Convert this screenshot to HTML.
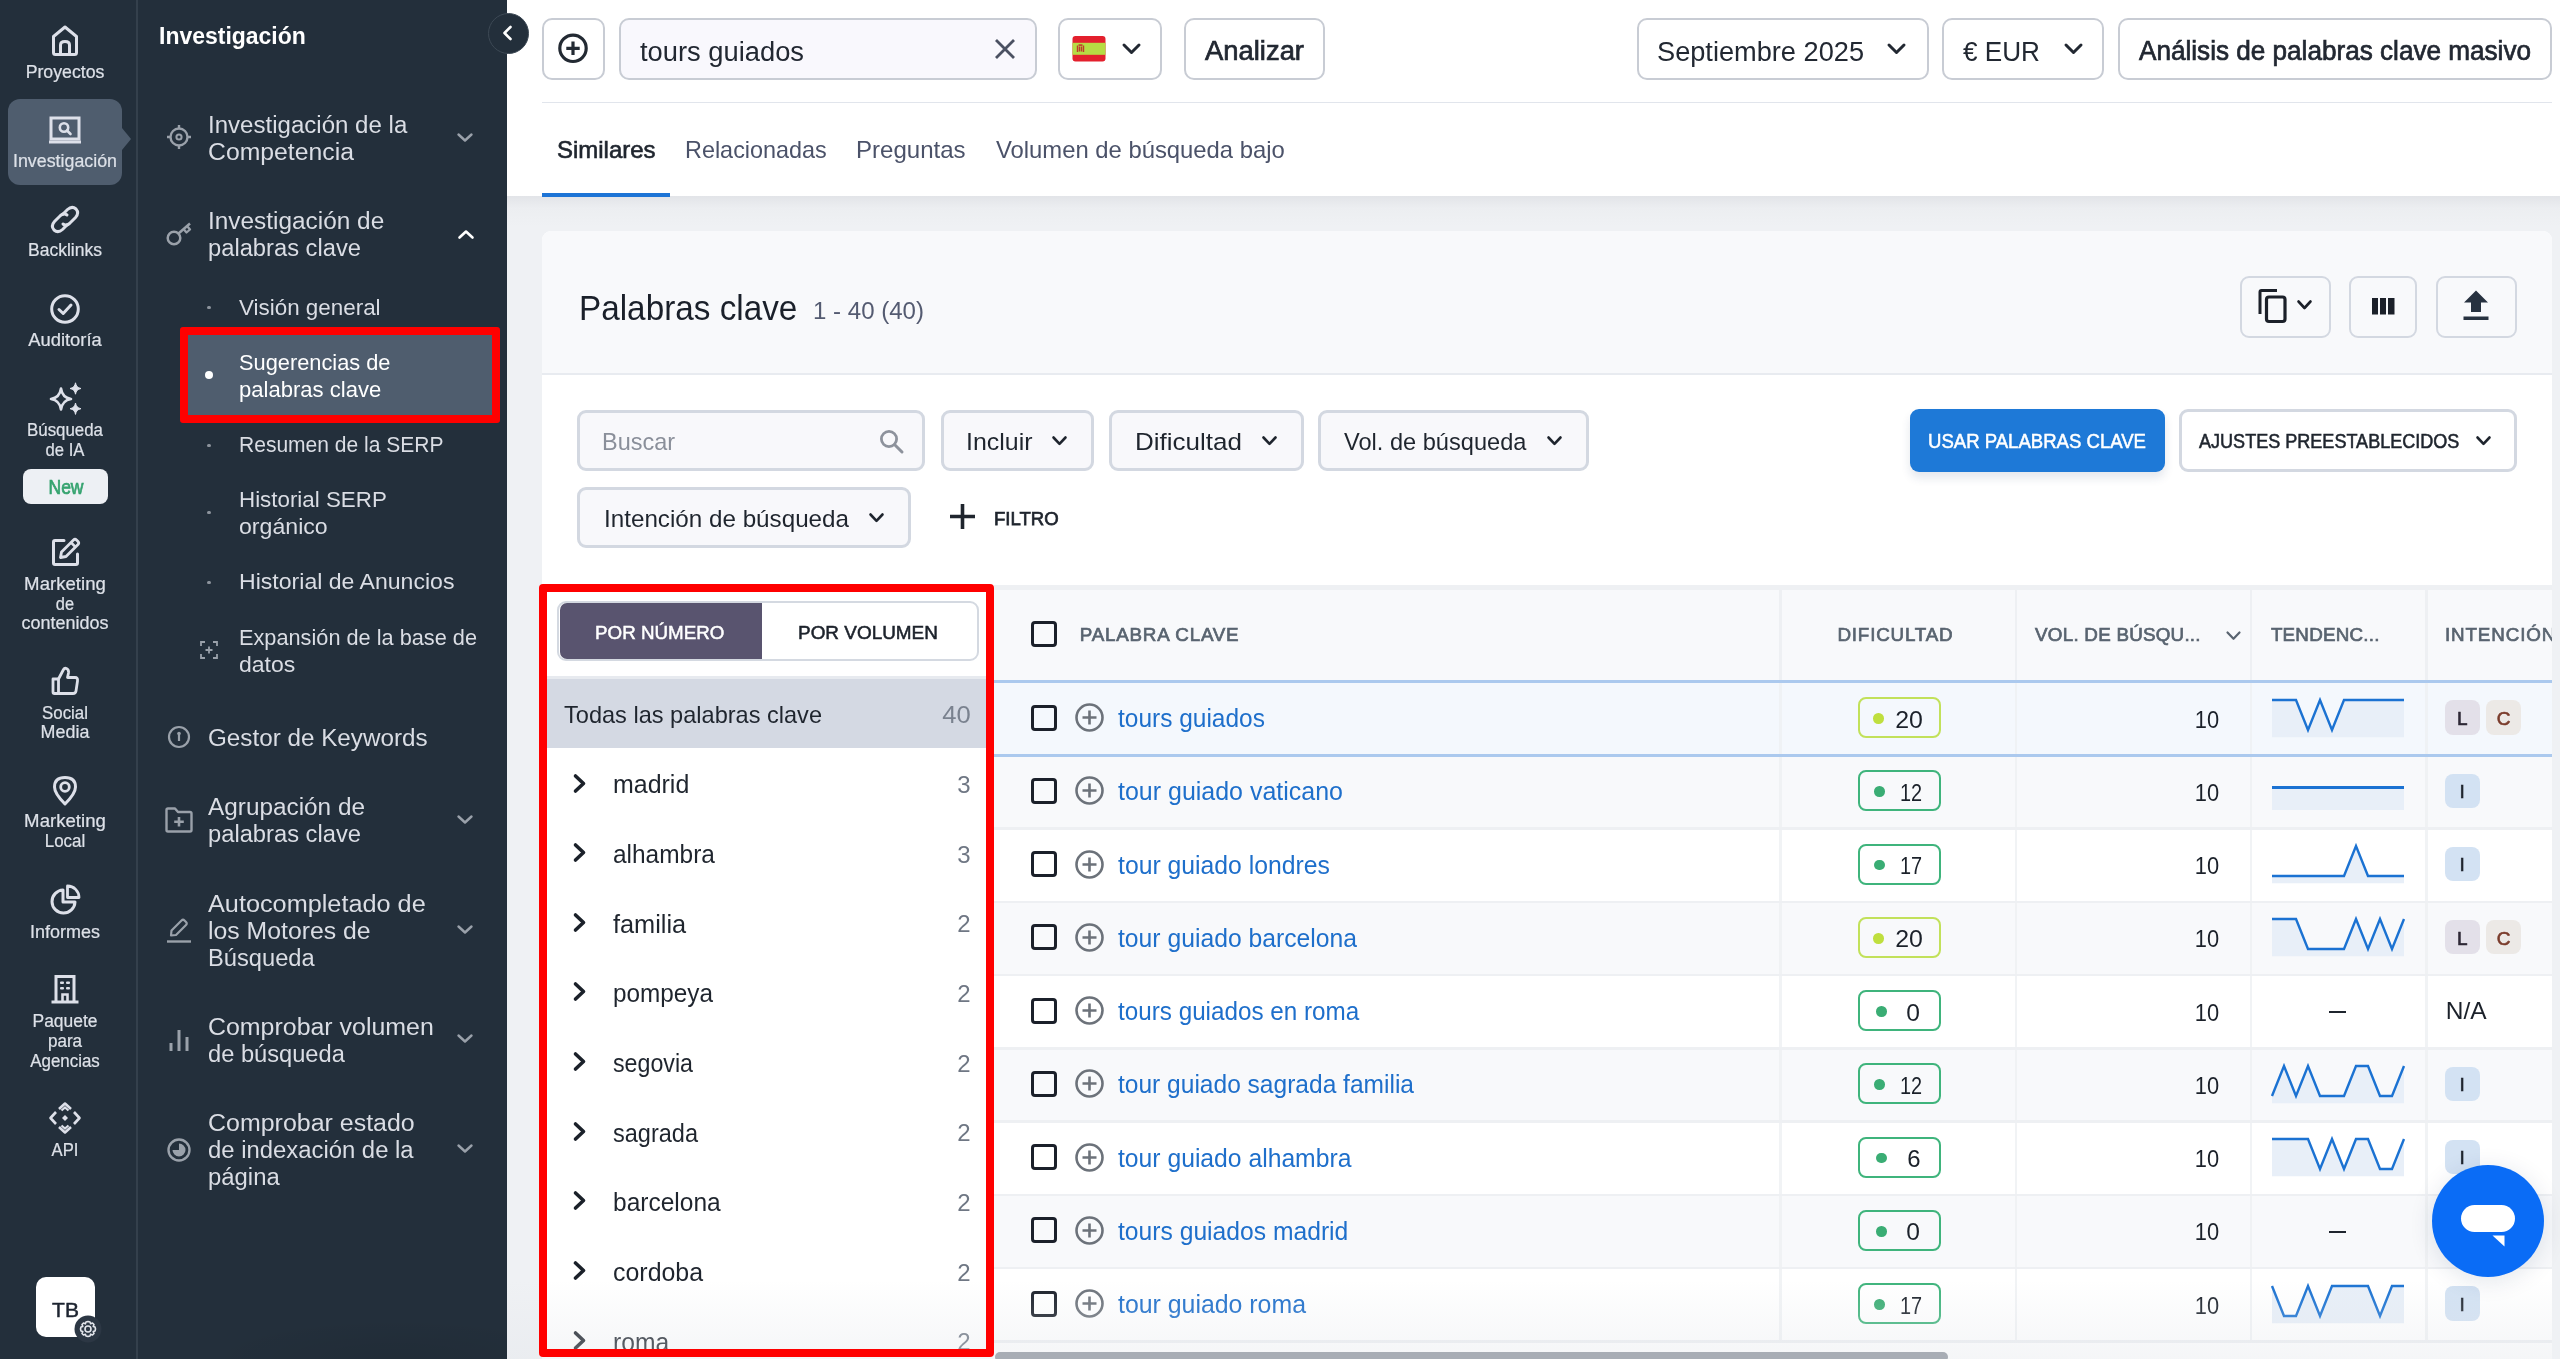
<!DOCTYPE html><html><head><meta charset="utf-8"><style>
html,body{margin:0;padding:0;width:2560px;height:1359px;overflow:hidden;background:#eff1f4;}
body{position:relative;font-family:"Liberation Sans",sans-serif;}
.t{position:absolute;white-space:nowrap;}
.b{position:absolute;box-sizing:border-box;}
svg.b{overflow:visible;}
#root{position:absolute;left:0;top:0;width:2560px;height:1359px;overflow:hidden;background:#eff1f4;will-change:transform;}
</style></head><body><div id="root">
<div class="b" style="left:0.00px;top:0.00px;width:507.00px;height:1359.00px;background:#232f3b;"></div>
<div class="b" style="left:136.00px;top:0.00px;width:2.00px;height:1359.00px;background:#34404c;"></div>
<svg class="b" style="left:50.00px;top:24.00px;" width="30" height="33" viewBox="0 0 30 33" fill="none"><path d="M3.5 12.5 L15 3 L26.5 12.5 V28.5 Q26.5 30.5 24.5 30.5 H5.5 Q3.5 30.5 3.5 28.5 Z" stroke="#dde0e9" stroke-width="3" stroke-linejoin="round"/><path d="M10.5 30.5 V21 Q10.5 17.5 15 17.5 Q19.5 17.5 19.5 21 V30.5" stroke="#dde0e9" stroke-width="3"/></svg>
<div class="t" style="top:63.69px;font-size:17.5px;line-height:17.5px;color:#dde1e8;transform:scaleX(1.0114);transform-origin:center top;left:0.00px;width:130px;text-align:center;-webkit-text-stroke:0.2px #dde1e8;">Proyectos</div>
<div class="b" style="left:8.00px;top:98.50px;width:114.00px;height:86.00px;background:#4f5d6e;border-radius:12px;"></div>
<svg class="b" style="left:122.00px;top:128.00px;" width="10" height="22" viewBox="0 0 10 22" fill="none"><path d="M0 0 L9 11 L0 22 Z" fill="#4f5d6e"/></svg>
<svg class="b" style="left:48.00px;top:116.00px;" width="34" height="29" viewBox="0 0 34 29" fill="none"><rect x="3" y="2" width="28" height="21" stroke="#dde0e9" stroke-width="3"/><rect x="1" y="24.5" width="32" height="3" fill="#dde0e9"/><circle cx="16" cy="11.5" r="4.2" stroke="#dde0e9" stroke-width="2.6"/><path d="M19 14.5 L22.5 18" stroke="#dde0e9" stroke-width="2.6" stroke-linecap="round"/></svg>
<div class="t" style="top:153.19px;font-size:17.5px;line-height:17.5px;color:#dde1e8;transform:scaleX(1.0181);transform-origin:center top;left:0.00px;width:130px;text-align:center;-webkit-text-stroke:0.2px #dde1e8;">Investigación</div>
<svg class="b" style="left:50.00px;top:204.00px;" width="30" height="31" viewBox="0 0 30 31" fill="none"><path d="M12.5 10.5 L17.5 5.5 Q22 1.5 26 5 Q29.5 9 25.5 13.5 L19.5 19.5 Q16 22.5 13 20" stroke="#dde0e9" stroke-width="3" stroke-linecap="round"/><path d="M17.5 20.5 L12.5 25.5 Q8 29.5 4 26 Q0.5 22 4.5 17.5 L10.5 11.5 Q14 8.5 17 11" stroke="#dde0e9" stroke-width="3" stroke-linecap="round"/></svg>
<div class="t" style="top:242.49px;font-size:17.5px;line-height:17.5px;color:#dde1e8;transform:scaleX(1.0011);transform-origin:center top;left:0.00px;width:130px;text-align:center;-webkit-text-stroke:0.2px #dde1e8;">Backlinks</div>
<svg class="b" style="left:50.00px;top:294.00px;" width="30" height="30" viewBox="0 0 30 30" fill="none"><circle cx="15" cy="15" r="13.3" stroke="#dde0e9" stroke-width="3"/><path d="M9 15.5 L13.2 19.5 L21 11" stroke="#dde0e9" stroke-width="3" stroke-linecap="round" stroke-linejoin="round"/></svg>
<div class="t" style="top:332.29px;font-size:17.5px;line-height:17.5px;color:#dde1e8;transform:scaleX(1.0508);transform-origin:center top;left:0.00px;width:130px;text-align:center;-webkit-text-stroke:0.2px #dde1e8;">Auditoría</div>
<svg class="b" style="left:48.00px;top:382.00px;" width="34" height="34" viewBox="0 0 34 34" fill="none"><path d="M13 6.5 Q14.2 15.5 23 17 Q14.2 18.5 13 27.5 Q11.8 18.5 3 17 Q11.8 15.5 13 6.5 Z" stroke="#dde0e9" stroke-width="2.6" stroke-linejoin="round"/><path d="M27.5 0.8 Q28.2 5.7 33 6.5 Q28.2 7.3 27.5 12.2 Q26.8 7.3 22 6.5 Q26.8 5.7 27.5 0.8 Z" fill="#dde0e9" stroke="#dde0e9" stroke-width="1"/><path d="M27.5 21 Q28.2 25.9 33 26.7 Q28.2 27.5 27.5 32.4 Q26.8 27.5 22 26.7 Q26.8 25.9 27.5 21 Z" fill="#dde0e9" stroke="#dde0e9" stroke-width="1"/></svg>
<div class="t" style="top:422.19px;font-size:17.5px;line-height:17.5px;color:#dde1e8;transform:scaleX(0.9642);transform-origin:center top;left:0.00px;width:130px;text-align:center;-webkit-text-stroke:0.2px #dde1e8;">Búsqueda</div>
<div class="t" style="top:441.99px;font-size:17.5px;line-height:17.5px;color:#dde1e8;transform:scaleX(0.9520);transform-origin:center top;left:0.00px;width:130px;text-align:center;-webkit-text-stroke:0.2px #dde1e8;">de IA</div>
<div class="b" style="left:23.00px;top:469.00px;width:85.00px;height:34.50px;background:#edf0f4;border-radius:8px;"></div>
<div class="t" style="top:477.99px;font-size:19.5px;line-height:19.5px;color:#35a36f;-webkit-text-stroke:0.7px #35a36f;transform:scaleX(0.8972);transform-origin:center top;left:25.50px;width:80px;text-align:center;">New</div>
<svg class="b" style="left:50.00px;top:537.00px;" width="31" height="31" viewBox="0 0 31 31" fill="none"><path d="M14 3.5 H5 Q3.5 3.5 3.5 5 V26 Q3.5 27.5 5 27.5 H26 Q27.5 27.5 27.5 26 V17" stroke="#dde0e9" stroke-width="3" stroke-linecap="round"/><path d="M10.5 20.5 L11.5 15 L23.5 3 Q25 1.6 26.5 3 L28 4.5 Q29.4 6 28 7.5 L16 19.5 Z" stroke="#dde0e9" stroke-width="2.8" stroke-linejoin="round"/><path d="M21 5.5 L25.5 10" stroke="#dde0e9" stroke-width="2.5"/></svg>
<div class="t" style="top:575.69px;font-size:17.5px;line-height:17.5px;color:#dde1e8;transform:scaleX(1.0639);transform-origin:center top;left:0.00px;width:130px;text-align:center;-webkit-text-stroke:0.2px #dde1e8;">Marketing</div>
<div class="t" style="top:595.69px;font-size:17.5px;line-height:17.5px;color:#dde1e8;transform:scaleX(0.9375);transform-origin:center top;left:0.00px;width:130px;text-align:center;-webkit-text-stroke:0.2px #dde1e8;">de</div>
<div class="t" style="top:615.39px;font-size:17.5px;line-height:17.5px;color:#dde1e8;transform:scaleX(1.0278);transform-origin:center top;left:0.00px;width:130px;text-align:center;-webkit-text-stroke:0.2px #dde1e8;">contenidos</div>
<svg class="b" style="left:50.00px;top:666.00px;" width="30" height="30" viewBox="0 0 30 30" fill="none"><path d="M3 13 H8.5 V27.5 H4.5 Q3 27.5 3 26 Z" stroke="#dde0e9" stroke-width="2.8" stroke-linejoin="round"/><path d="M8.5 13 L13.5 3.5 Q14.5 1.8 16.5 2.5 Q19 3.5 18.5 7 L17.5 11.5 H25 Q28 11.5 27.5 15 L26 25 Q25.6 27.5 23 27.5 H8.5" stroke="#dde0e9" stroke-width="2.8" stroke-linejoin="round"/></svg>
<div class="t" style="top:704.69px;font-size:17.5px;line-height:17.5px;color:#dde1e8;transform:scaleX(0.9651);transform-origin:center top;left:0.00px;width:130px;text-align:center;-webkit-text-stroke:0.2px #dde1e8;">Social</div>
<div class="t" style="top:724.49px;font-size:17.5px;line-height:17.5px;color:#dde1e8;transform:scaleX(1.0227);transform-origin:center top;left:0.00px;width:130px;text-align:center;-webkit-text-stroke:0.2px #dde1e8;">Media</div>
<svg class="b" style="left:52.00px;top:775.00px;" width="26" height="31" viewBox="0 0 26 31" fill="none"><path d="M13 29 Q2.5 18.5 2.5 12 Q2.5 2.5 13 2.5 Q23.5 2.5 23.5 12 Q23.5 18.5 13 29 Z" stroke="#dde0e9" stroke-width="3" stroke-linejoin="round"/><circle cx="13" cy="12" r="4.3" stroke="#dde0e9" stroke-width="2.8"/></svg>
<div class="t" style="top:812.69px;font-size:17.5px;line-height:17.5px;color:#dde1e8;transform:scaleX(1.0639);transform-origin:center top;left:0.00px;width:130px;text-align:center;-webkit-text-stroke:0.2px #dde1e8;">Marketing</div>
<div class="t" style="top:832.69px;font-size:17.5px;line-height:17.5px;color:#dde1e8;transform:scaleX(0.9680);transform-origin:center top;left:0.00px;width:130px;text-align:center;-webkit-text-stroke:0.2px #dde1e8;">Local</div>
<svg class="b" style="left:50.00px;top:884.00px;" width="31" height="31" viewBox="0 0 31 31" fill="none"><path d="M13 6 A11.5 11.5 0 1 0 25 18 H13 Z" stroke="#dde0e9" stroke-width="3" stroke-linejoin="round"/><path d="M17.5 2 A11.5 11.5 0 0 1 29 13.5 H17.5 Z" stroke="#dde0e9" stroke-width="2.8" stroke-linejoin="round"/></svg>
<div class="t" style="top:923.69px;font-size:17.5px;line-height:17.5px;color:#dde1e8;transform:scaleX(1.0267);transform-origin:center top;left:0.00px;width:130px;text-align:center;-webkit-text-stroke:0.2px #dde1e8;">Informes</div>
<svg class="b" style="left:50.00px;top:974.00px;" width="30" height="30" viewBox="0 0 30 30" fill="none"><path d="M6 28 V2.5 H24 V28" stroke="#dde0e9" stroke-width="3"/><path d="M1.5 28 H28.5" stroke="#dde0e9" stroke-width="3"/><path d="M12.5 28 V20.5 H17.5 V28" stroke="#dde0e9" stroke-width="2.6"/><rect x="10" y="7.5" width="4" height="2.6" rx="1" fill="#dde0e9"/><rect x="16" y="7.5" width="4" height="2.6" rx="1" fill="#dde0e9"/><rect x="10" y="13" width="4" height="2.6" rx="1" fill="#dde0e9"/><rect x="16" y="13" width="4" height="2.6" rx="1" fill="#dde0e9"/></svg>
<div class="t" style="top:1012.69px;font-size:17.5px;line-height:17.5px;color:#dde1e8;transform:scaleX(0.9969);transform-origin:center top;left:0.00px;width:130px;text-align:center;-webkit-text-stroke:0.2px #dde1e8;">Paquete</div>
<div class="t" style="top:1033.19px;font-size:17.5px;line-height:17.5px;color:#dde1e8;transform:scaleX(0.9764);transform-origin:center top;left:0.00px;width:130px;text-align:center;-webkit-text-stroke:0.2px #dde1e8;">para</div>
<div class="t" style="top:1052.89px;font-size:17.5px;line-height:17.5px;color:#dde1e8;transform:scaleX(0.9654);transform-origin:center top;left:0.00px;width:130px;text-align:center;-webkit-text-stroke:0.2px #dde1e8;">Agencias</div>
<svg class="b" style="left:48.00px;top:1101.00px;" width="34" height="34" viewBox="0 0 34 34" fill="none"><path d="M11 8 L17 2.5 L23 8" stroke="#dde0e9" stroke-width="2.6" stroke-linejoin="round"/><path d="M13.5 9.5 L17 6.5 L20.5 9.5" stroke="#dde0e9" stroke-width="2.2"/><path d="M11 26 L17 31.5 L23 26" stroke="#dde0e9" stroke-width="2.6" stroke-linejoin="round"/><path d="M13.5 24.5 L17 27.5 L20.5 24.5" stroke="#dde0e9" stroke-width="2.2"/><path d="M8 11 L2.5 17 L8 23" stroke="#dde0e9" stroke-width="2.6" stroke-linejoin="round"/><path d="M26 11 L31.5 17 L26 23" stroke="#dde0e9" stroke-width="2.6" stroke-linejoin="round"/><path d="M17 14 L20 17 L17 20 L14 17 Z" fill="#dde0e9"/></svg>
<div class="t" style="top:1141.99px;font-size:17.5px;line-height:17.5px;color:#dde1e8;transform:scaleX(0.9501);transform-origin:center top;left:0.00px;width:130px;text-align:center;-webkit-text-stroke:0.2px #dde1e8;">API</div>
<div class="b" style="left:35.50px;top:1277.00px;width:59.50px;height:60.00px;background:#ffffff;border-radius:10px;"></div>
<div class="t" style="top:1298.72px;font-size:21px;line-height:21px;color:#1d2430;-webkit-text-stroke:0.5px #1d2430;left:35.50px;width:60px;text-align:center;">TB</div>
<svg class="b" style="left:74.00px;top:1315.00px;" width="28" height="28" viewBox="0 0 28 28" fill="none"><circle cx="14" cy="14" r="13.5" fill="#2c3744"/><path d="M14 6.5 L16 7 L16.6 8.8 L18.5 8 L20 9.5 L19.2 11.4 L21 12 L21.5 14 L21 16 L19.2 16.6 L20 18.5 L18.5 20 L16.6 19.2 L16 21 L14 21.5 L12 21 L11.4 19.2 L9.5 20 L8 18.5 L8.8 16.6 L7 16 L6.5 14 L7 12 L8.8 11.4 L8 9.5 L9.5 8 L11.4 8.8 L12 7 Z" stroke="#e3e6ec" stroke-width="1.6" stroke-linejoin="round"/><circle cx="14" cy="14" r="3" stroke="#e3e6ec" stroke-width="1.6"/></svg>
<div class="b" style="left:137.00px;top:1300.00px;width:370.00px;height:59.00px;background:radial-gradient(ellipse 75% 100% at 70% 100%, rgba(0,0,0,0.07), rgba(0,0,0,0) 70%);"></div>
<div class="t" style="top:25.03px;font-size:23px;line-height:23px;color:#ffffff;font-weight:700;transform:scaleX(0.9987);transform-origin:left top;left:159.00px;">Investigación</div>
<svg class="b" style="left:166.00px;top:124.00px;" width="26" height="26" viewBox="0 0 26 26" fill="none"><circle cx="13" cy="13" r="8.5" stroke="#9aa1aa" stroke-width="2.4"/><circle cx="13" cy="13" r="2.6" stroke="#9aa1aa" stroke-width="2"/><path d="M13 1 V4.5 M13 21.5 V25 M1 13 H4.5 M21.5 13 H25" stroke="#9aa1aa" stroke-width="2.4"/></svg>
<div class="t" style="top:114.11px;font-size:23.5px;line-height:23.5px;color:#dadde4;transform:scaleX(1.0238);transform-origin:left top;left:208.00px;">Investigación de la</div>
<div class="t" style="top:140.61px;font-size:23.5px;line-height:23.5px;color:#dadde4;transform:scaleX(1.0537);transform-origin:left top;left:208.00px;">Competencia</div>
<svg class="b" style="left:457.00px;top:133.00px;" width="16" height="10.0" viewBox="0 0 16 10.0" fill="none"><path d="M1.5 1.5 L8.0 7.5 L14.5 1.5" stroke="#9aa1aa" stroke-width="2.4" stroke-linecap="round" stroke-linejoin="round"/></svg>
<svg class="b" style="left:165.00px;top:220.00px;" width="28" height="26" viewBox="0 0 28 26" fill="none"><circle cx="9" cy="18" r="6.3" stroke="#9aa1aa" stroke-width="2.5"/><path d="M13.5 13.5 L25 3.5" stroke="#9aa1aa" stroke-width="2.5"/><path d="M18.5 9 L21.5 12.5 L25 9.5 L22 6" stroke="#9aa1aa" stroke-width="2.3" stroke-linejoin="round"/></svg>
<div class="t" style="top:210.21px;font-size:23.5px;line-height:23.5px;color:#dadde4;transform:scaleX(1.0375);transform-origin:left top;left:208.00px;">Investigación de</div>
<div class="t" style="top:236.81px;font-size:23.5px;line-height:23.5px;color:#dadde4;transform:scaleX(1.0096);transform-origin:left top;left:208.00px;">palabras clave</div>
<svg class="b" style="left:458.00px;top:230.00px;" width="16" height="10.0" viewBox="0 0 16 10.0" fill="none"><path d="M1.5 7.5 L8.0 1.5 L14.5 7.5" stroke="#ffffff" stroke-width="2.6" stroke-linecap="round" stroke-linejoin="round"/></svg>
<div class="b" style="left:207.40px;top:305.90px;width:3.20px;height:3.20px;background:#8d949d;border-radius:50%;"></div>
<div class="t" style="top:296.95px;font-size:22.5px;line-height:22.5px;color:#dadde4;transform:scaleX(0.9958);transform-origin:left top;left:239.00px;">Visión general</div>
<div class="b" style="left:179.50px;top:327.00px;width:320.50px;height:96.00px;border:8px solid #ff0000;border-radius:3px;"></div>
<div class="b" style="left:187.50px;top:335.00px;width:304.50px;height:80.00px;background:#4f5d6e;"></div>
<div class="b" style="left:205.00px;top:371.00px;width:8.00px;height:8.00px;background:#ffffff;border-radius:50%;"></div>
<div class="t" style="top:352.45px;font-size:22.5px;line-height:22.5px;color:#ffffff;transform:scaleX(0.9689);transform-origin:left top;left:239.00px;">Sugerencias de</div>
<div class="t" style="top:378.95px;font-size:22.5px;line-height:22.5px;color:#ffffff;transform:scaleX(0.9801);transform-origin:left top;left:239.00px;">palabras clave</div>
<div class="b" style="left:207.40px;top:443.90px;width:3.20px;height:3.20px;background:#8d949d;border-radius:50%;"></div>
<div class="t" style="top:434.45px;font-size:22.5px;line-height:22.5px;color:#dadde4;transform:scaleX(0.9348);transform-origin:left top;left:239.00px;">Resumen de la SERP</div>
<div class="b" style="left:207.40px;top:510.90px;width:3.20px;height:3.20px;background:#8d949d;border-radius:50%;"></div>
<div class="t" style="top:489.45px;font-size:22.5px;line-height:22.5px;color:#dadde4;transform:scaleX(0.9933);transform-origin:left top;left:239.00px;">Historial SERP</div>
<div class="t" style="top:516.45px;font-size:22.5px;line-height:22.5px;color:#dadde4;transform:scaleX(1.0277);transform-origin:left top;left:239.00px;">orgánico</div>
<div class="b" style="left:207.40px;top:580.90px;width:3.20px;height:3.20px;background:#8d949d;border-radius:50%;"></div>
<div class="t" style="top:571.45px;font-size:22.5px;line-height:22.5px;color:#dadde4;transform:scaleX(1.0256);transform-origin:left top;left:239.00px;">Historial de Anuncios</div>
<svg class="b" style="left:200.00px;top:641.00px;" width="18" height="18" viewBox="0 0 18 18" fill="none"><path d="M1 5 V1 H5 M13 1 H17 V5 M17 13 V17 H13 M5 17 H1 V13" stroke="#9aa1aa" stroke-width="1.8"/><path d="M9 5.5 V12.5 M5.5 9 H12.5" stroke="#9aa1aa" stroke-width="1.8"/></svg>
<div class="t" style="top:627.15px;font-size:22.5px;line-height:22.5px;color:#dadde4;transform:scaleX(0.9658);transform-origin:left top;left:239.00px;">Expansión de la base de</div>
<div class="t" style="top:653.65px;font-size:22.5px;line-height:22.5px;color:#dadde4;transform:scaleX(1.0228);transform-origin:left top;left:239.00px;">datos</div>
<svg class="b" style="left:167.00px;top:725.00px;" width="24" height="24" viewBox="0 0 24 24" fill="none"><circle cx="12" cy="12" r="10" stroke="#9aa1aa" stroke-width="2.2"/><circle cx="12" cy="8.5" r="1.8" fill="#9aa1aa"/><path d="M12 9 V16" stroke="#9aa1aa" stroke-width="2.2"/></svg>
<div class="t" style="top:726.61px;font-size:23.5px;line-height:23.5px;color:#dadde4;transform:scaleX(1.0314);transform-origin:left top;left:208.00px;">Gestor de Keywords</div>
<svg class="b" style="left:164.00px;top:806.00px;" width="30" height="28" viewBox="0 0 30 28" fill="none"><path d="M2.5 4 Q2.5 2.5 4 2.5 H11 L14 6 H26 Q27.5 6 27.5 7.5 V24 Q27.5 25.5 26 25.5 H4 Q2.5 25.5 2.5 24 Z" stroke="#9aa1aa" stroke-width="2.4" stroke-linejoin="round"/><path d="M15 11 V20.5 M10.2 15.8 H19.8" stroke="#9aa1aa" stroke-width="2.6"/></svg>
<div class="t" style="top:796.41px;font-size:23.5px;line-height:23.5px;color:#dadde4;transform:scaleX(1.0359);transform-origin:left top;left:208.00px;">Agrupación de</div>
<div class="t" style="top:823.31px;font-size:23.5px;line-height:23.5px;color:#dadde4;transform:scaleX(1.0096);transform-origin:left top;left:208.00px;">palabras clave</div>
<svg class="b" style="left:457.00px;top:814.50px;" width="16" height="10.0" viewBox="0 0 16 10.0" fill="none"><path d="M1.5 1.5 L8.0 7.5 L14.5 1.5" stroke="#9aa1aa" stroke-width="2.4" stroke-linecap="round" stroke-linejoin="round"/></svg>
<svg class="b" style="left:165.00px;top:916.00px;" width="28" height="28" viewBox="0 0 28 28" fill="none"><path d="M6 19.5 L6.5 14.5 L16.5 4.5 Q18 3 19.5 4.5 L21 6 Q22.5 7.5 21 9 L11 19 Z" stroke="#9aa1aa" stroke-width="2.2" stroke-linejoin="round"/><path d="M2 25.5 H26" stroke="#9aa1aa" stroke-width="2.4"/></svg>
<div class="t" style="top:893.21px;font-size:23.5px;line-height:23.5px;color:#dadde4;transform:scaleX(1.0750);transform-origin:left top;left:208.00px;">Autocompletado de</div>
<div class="t" style="top:919.81px;font-size:23.5px;line-height:23.5px;color:#dadde4;transform:scaleX(1.0549);transform-origin:left top;left:208.00px;">los Motores de</div>
<div class="t" style="top:946.61px;font-size:23.5px;line-height:23.5px;color:#dadde4;transform:scaleX(1.0081);transform-origin:left top;left:208.00px;">Búsqueda</div>
<svg class="b" style="left:457.00px;top:925.00px;" width="16" height="10.0" viewBox="0 0 16 10.0" fill="none"><path d="M1.5 1.5 L8.0 7.5 L14.5 1.5" stroke="#9aa1aa" stroke-width="2.4" stroke-linecap="round" stroke-linejoin="round"/></svg>
<svg class="b" style="left:168.00px;top:1027.00px;" width="22" height="26" viewBox="0 0 22 26" fill="none"><path d="M3 16 V24 M11 3 V24 M19 10 V24" stroke="#9aa1aa" stroke-width="3"/></svg>
<div class="t" style="top:1016.01px;font-size:23.5px;line-height:23.5px;color:#dadde4;transform:scaleX(1.0606);transform-origin:left top;left:208.00px;">Comprobar volumen</div>
<div class="t" style="top:1042.61px;font-size:23.5px;line-height:23.5px;color:#dadde4;transform:scaleX(1.0066);transform-origin:left top;left:208.00px;">de búsqueda</div>
<svg class="b" style="left:457.00px;top:1034.00px;" width="16" height="10.0" viewBox="0 0 16 10.0" fill="none"><path d="M1.5 1.5 L8.0 7.5 L14.5 1.5" stroke="#9aa1aa" stroke-width="2.4" stroke-linecap="round" stroke-linejoin="round"/></svg>
<svg class="b" style="left:166.00px;top:1137.00px;" width="26" height="26" viewBox="0 0 26 26" fill="none"><circle cx="13" cy="13" r="10.5" stroke="#9aa1aa" stroke-width="2.4"/><path d="M13 6.5 A6.5 6.5 0 1 1 6.5 13 H13 Z" fill="#9aa1aa"/></svg>
<div class="t" style="top:1112.01px;font-size:23.5px;line-height:23.5px;color:#dadde4;transform:scaleX(1.0620);transform-origin:left top;left:208.00px;">Comprobar estado</div>
<div class="t" style="top:1139.21px;font-size:23.5px;line-height:23.5px;color:#dadde4;transform:scaleX(1.0152);transform-origin:left top;left:208.00px;">de indexación de la</div>
<div class="t" style="top:1166.11px;font-size:23.5px;line-height:23.5px;color:#dadde4;transform:scaleX(1.0160);transform-origin:left top;left:208.00px;">página</div>
<svg class="b" style="left:457.00px;top:1143.70px;" width="16" height="10.0" viewBox="0 0 16 10.0" fill="none"><path d="M1.5 1.5 L8.0 7.5 L14.5 1.5" stroke="#9aa1aa" stroke-width="2.4" stroke-linecap="round" stroke-linejoin="round"/></svg>
<div class="b" style="left:507.00px;top:0.00px;width:2053.00px;height:196.00px;background:#ffffff;"></div>
<div class="b" style="left:507.00px;top:196.00px;width:2053.00px;height:30.00px;background:linear-gradient(#e2e4e8,#eceef1 40%,#eff1f4);"></div>
<div class="b" style="left:542.00px;top:101.50px;width:2010.00px;height:1.50px;background:#e1e5ec;"></div>
<div class="b" style="left:487.50px;top:13.00px;width:41.00px;height:41.00px;background:#232f3b;border:1.5px solid #3d4955;border-radius:50%;"></div>
<svg class="b" style="left:500.00px;top:25.00px;" width="16" height="16" viewBox="0 0 16 16" fill="none"><path d="M10.5 2 L4.5 8 L10.5 14" stroke="#ffffff" stroke-width="2.6" stroke-linecap="round" stroke-linejoin="round"/></svg>
<div class="b" style="left:542.00px;top:18.00px;width:63.00px;height:62.00px;border:2px solid #c8ccd4;border-radius:10px;background:#ffffff;"></div>
<svg class="b" style="left:557.00px;top:32.00px;" width="32" height="32" viewBox="0 0 32 32" fill="none"><circle cx="16" cy="16.3" r="13.2" stroke="#232a33" stroke-width="3.2"/><path d="M16 9.5 V23 M9.3 16.3 H22.7" stroke="#232a33" stroke-width="3.2"/></svg>
<div class="b" style="left:619.00px;top:18.00px;width:418.00px;height:62.00px;border:2px solid #c8ccd4;border-radius:10px;background:#f9f8fd;"></div>
<div class="t" style="top:38.64px;font-size:27px;line-height:27px;color:#222832;transform:scaleX(1.0117);transform-origin:left top;left:640.00px;">tours guiados</div>
<svg class="b" style="left:994.00px;top:38.00px;" width="22" height="22" viewBox="0 0 22 22" fill="none"><path d="M2 2 L20 20 M20 2 L2 20" stroke="#4b5162" stroke-width="2.8"/></svg>
<div class="b" style="left:1058.00px;top:18.00px;width:104.00px;height:62.00px;border:2px solid #c8ccd4;border-radius:10px;background:#ffffff;"></div>
<svg class="b" style="left:1072.00px;top:36.00px;" width="34" height="26" viewBox="0 0 34 26" fill="none"><rect x="0.5" y="0" width="33" height="25.5" rx="3" fill="#e3202d"/><rect x="0.5" y="6.8" width="33" height="12" fill="#b6dc44"/><path d="M5.5 9.5 V16 M7.5 10.5 V15.5 M9.5 10.5 V15.5 M11.5 9.5 V16" stroke="#c0392b" stroke-width="1.4"/><rect x="6.5" y="8.3" width="4" height="1.6" fill="#c0392b"/></svg>
<svg class="b" style="left:1122.00px;top:43.00px;" width="19" height="12" viewBox="0 0 19 12" fill="none"><path d="M2 2 L9.5 9.5 L17 2" stroke="#222832" stroke-width="3" stroke-linecap="round" stroke-linejoin="round"/></svg>
<div class="b" style="left:1184.00px;top:18.00px;width:141.00px;height:62.00px;border:2px solid #c8ccd4;border-radius:10px;background:#ffffff;"></div>
<div class="t" style="top:38.24px;font-size:27px;line-height:27px;color:#222832;-webkit-text-stroke:0.7px #222832;transform:scaleX(1.0149);transform-origin:left top;left:1205.00px;">Analizar</div>
<div class="b" style="left:1637.00px;top:18.00px;width:291.50px;height:62.00px;border:2px solid #c8ccd4;border-radius:10px;background:#ffffff;"></div>
<div class="t" style="top:38.64px;font-size:27px;line-height:27px;color:#222832;transform:scaleX(1.0066);transform-origin:left top;left:1657.00px;">Septiembre 2025</div>
<svg class="b" style="left:1887.00px;top:43.00px;" width="19" height="12" viewBox="0 0 19 12" fill="none"><path d="M2 2 L9.5 9.5 L17 2" stroke="#222832" stroke-width="3" stroke-linecap="round" stroke-linejoin="round"/></svg>
<div class="b" style="left:1942.00px;top:18.00px;width:162.00px;height:62.00px;border:2px solid #c8ccd4;border-radius:10px;background:#ffffff;"></div>
<div class="t" style="top:38.64px;font-size:27px;line-height:27px;color:#222832;transform:scaleX(0.9682);transform-origin:left top;left:1963.00px;">€ EUR</div>
<svg class="b" style="left:2063.50px;top:43.00px;" width="19" height="12" viewBox="0 0 19 12" fill="none"><path d="M2 2 L9.5 9.5 L17 2" stroke="#222832" stroke-width="3" stroke-linecap="round" stroke-linejoin="round"/></svg>
<div class="b" style="left:2117.50px;top:18.00px;width:434.50px;height:62.00px;border:2px solid #c8ccd4;border-radius:10px;background:#ffffff;"></div>
<div class="t" style="top:38.34px;font-size:27px;line-height:27px;color:#222832;-webkit-text-stroke:0.7px #222832;transform:scaleX(0.9674);transform-origin:left top;left:2139.00px;">Análisis de palabras clave masivo</div>
<div class="t" style="top:138.28px;font-size:24px;line-height:24px;color:#20262f;-webkit-text-stroke:0.6px #20262f;transform:scaleX(0.9991);transform-origin:left top;left:556.60px;">Similares</div>
<div class="t" style="top:138.28px;font-size:24px;line-height:24px;color:#4b5269;transform:scaleX(0.9750);transform-origin:left top;left:685.10px;">Relacionadas</div>
<div class="t" style="top:138.28px;font-size:24px;line-height:24px;color:#4b5269;transform:scaleX(1.0017);transform-origin:left top;left:856.40px;">Preguntas</div>
<div class="t" style="top:137.98px;font-size:24px;line-height:24px;color:#4b5269;transform:scaleX(0.9927);transform-origin:left top;left:995.60px;">Volumen de búsqueda bajo</div>
<div class="b" style="left:542.00px;top:193.00px;width:128.00px;height:3.50px;background:#1d74d6;"></div>
<div class="b" style="left:542.00px;top:231.00px;width:2010.00px;height:1128.00px;background:#ffffff;border-radius:9px 9px 0 0;"></div>
<div class="b" style="left:542.00px;top:231.00px;width:2010.00px;height:141.50px;background:#f8f9fb;border-radius:9px 9px 0 0;"></div>
<div class="b" style="left:542.00px;top:372.50px;width:2010.00px;height:2.00px;background:#e8ebf0;"></div>
<div class="t" style="top:290.50px;font-size:34.5px;line-height:34.5px;color:#1a202a;transform:scaleX(0.9651);transform-origin:left top;left:578.70px;">Palabras clave</div>
<div class="t" style="top:299.81px;font-size:23.5px;line-height:23.5px;color:#545b71;transform:scaleX(1.0238);transform-origin:left top;left:813.00px;">1 - 40 (40)</div>
<div class="b" style="left:2240.00px;top:275.50px;width:91.00px;height:62.00px;border:2.5px solid #d3d8e1;border-radius:9px;background:#f8f9fb;"></div>
<svg class="b" style="left:2258.00px;top:289.00px;" width="30" height="35" viewBox="0 0 30 35" fill="none"><path d="M2 25 V3 Q2 1.5 3.5 1.5 H19" stroke="#1b2029" stroke-width="3"/><rect x="8.5" y="8" width="18.5" height="24.5" rx="2.5" stroke="#1b2029" stroke-width="3.2"/></svg>
<svg class="b" style="left:2297.00px;top:300.00px;" width="16" height="11" viewBox="0 0 16 11" fill="none"><path d="M1.5 1.5 L7.5 8 L13.5 1.5" stroke="#1b2029" stroke-width="2.6" stroke-linecap="round" stroke-linejoin="round"/></svg>
<div class="b" style="left:2349.00px;top:275.50px;width:68.00px;height:62.00px;border:2.5px solid #d3d8e1;border-radius:9px;background:#f8f9fb;"></div>
<svg class="b" style="left:2371.50px;top:298.00px;" width="23" height="17" viewBox="0 0 23 17" fill="none"><rect x="0" y="0" width="6" height="16.5" fill="#1b2029"/><rect x="8" y="0" width="6" height="16.5" fill="#1b2029"/><rect x="16" y="0" width="6.5" height="16.5" fill="#1b2029"/></svg>
<div class="b" style="left:2435.50px;top:275.50px;width:81.50px;height:62.00px;border:2.5px solid #d3d8e1;border-radius:9px;background:#f8f9fb;"></div>
<svg class="b" style="left:2462.00px;top:290.00px;" width="28" height="31" viewBox="0 0 28 31" fill="none"><path d="M14 0.5 L26 12.5 H19 V22 H9 V12.5 H2 Z" fill="#273240"/><rect x="1.5" y="26.5" width="25" height="3.5" fill="#273240"/></svg>
<div class="b" style="left:577.00px;top:409.50px;width:348.00px;height:61.50px;border:3px solid #d3d8e1;border-radius:9px;background:#f8f8fb;"></div>
<div class="t" style="top:430.48px;font-size:24px;line-height:24px;color:#8a8f9a;transform:scaleX(0.9773);transform-origin:left top;left:601.80px;">Buscar</div>
<svg class="b" style="left:879.00px;top:429.00px;" width="26" height="26" viewBox="0 0 26 26" fill="none"><circle cx="10" cy="10" r="7.6" stroke="#8d929c" stroke-width="2.8"/><path d="M15.5 15.5 L23 23" stroke="#8d929c" stroke-width="3" stroke-linecap="round"/></svg>
<div class="b" style="left:940.50px;top:409.50px;width:153.50px;height:61.50px;border:3px solid #d3d8e1;border-radius:9px;background:#f8f8fb;"></div>
<div class="t" style="top:430.06px;font-size:24.5px;line-height:24.5px;color:#1f252e;transform:scaleX(1.0175);transform-origin:left top;left:966.00px;">Incluir</div>
<svg class="b" style="left:1052.00px;top:435.50px;" width="15" height="9.3" viewBox="0 0 15 9.3" fill="none"><path d="M1.5 1.5 L7.5 7.800000000000001 L13.5 1.5" stroke="#1f252e" stroke-width="2.6" stroke-linecap="round" stroke-linejoin="round"/></svg>
<div class="b" style="left:1108.50px;top:409.50px;width:195.00px;height:61.50px;border:3px solid #d3d8e1;border-radius:9px;background:#f8f8fb;"></div>
<div class="t" style="top:429.76px;font-size:24.5px;line-height:24.5px;color:#1f252e;transform:scaleX(1.0619);transform-origin:left top;left:1135.10px;">Dificultad</div>
<svg class="b" style="left:1262.00px;top:435.50px;" width="15" height="9.3" viewBox="0 0 15 9.3" fill="none"><path d="M1.5 1.5 L7.5 7.800000000000001 L13.5 1.5" stroke="#1f252e" stroke-width="2.6" stroke-linecap="round" stroke-linejoin="round"/></svg>
<div class="b" style="left:1317.50px;top:409.50px;width:271.50px;height:61.50px;border:3px solid #d3d8e1;border-radius:9px;background:#f8f8fb;"></div>
<div class="t" style="top:429.76px;font-size:24.5px;line-height:24.5px;color:#1f252e;transform:scaleX(0.9632);transform-origin:left top;left:1344.30px;">Vol. de búsqueda</div>
<svg class="b" style="left:1546.50px;top:435.50px;" width="15" height="9.3" viewBox="0 0 15 9.3" fill="none"><path d="M1.5 1.5 L7.5 7.800000000000001 L13.5 1.5" stroke="#1f252e" stroke-width="2.6" stroke-linecap="round" stroke-linejoin="round"/></svg>
<div class="b" style="left:577.00px;top:486.50px;width:334.00px;height:61.00px;border:3px solid #d3d8e1;border-radius:9px;background:#f8f8fb;"></div>
<div class="t" style="top:506.56px;font-size:24.5px;line-height:24.5px;color:#1f252e;transform:scaleX(0.9882);transform-origin:left top;left:603.70px;">Intención de búsqueda</div>
<svg class="b" style="left:868.50px;top:512.50px;" width="15" height="9.3" viewBox="0 0 15 9.3" fill="none"><path d="M1.5 1.5 L7.5 7.800000000000001 L13.5 1.5" stroke="#1f252e" stroke-width="2.6" stroke-linecap="round" stroke-linejoin="round"/></svg>
<svg class="b" style="left:949.00px;top:503.00px;" width="27" height="27" viewBox="0 0 27 27" fill="none"><path d="M13.5 1 V26 M1 13.5 H26" stroke="#1f252e" stroke-width="3.6"/></svg>
<div class="t" style="top:508.65px;font-size:19.2px;line-height:19.2px;color:#1f252e;-webkit-text-stroke:0.75px #1f252e;transform:scaleX(0.9679);transform-origin:left top;left:993.50px;">FILTRO</div>
<div class="b" style="left:1910.00px;top:409.00px;width:254.50px;height:62.50px;background:#1e79d7;border-radius:9px;box-shadow:0 6px 10px rgba(30,60,110,0.12);"></div>
<div class="t" style="top:432.49px;font-size:19.5px;line-height:19.5px;color:#ffffff;-webkit-text-stroke:0.5px #ffffff;transform:scaleX(0.9518);transform-origin:left top;left:1928.00px;">USAR PALABRAS CLAVE</div>
<div class="b" style="left:2178.50px;top:409.00px;width:338.50px;height:62.50px;border:3px solid #d3d8e1;border-radius:9px;background:#ffffff;"></div>
<div class="t" style="top:432.49px;font-size:19.5px;line-height:19.5px;color:#1f252e;-webkit-text-stroke:0.55px #1f252e;transform:scaleX(0.9254);transform-origin:left top;left:2198.80px;">AJUSTES PREESTABLECIDOS</div>
<svg class="b" style="left:2475.50px;top:435.50px;" width="15" height="9.3" viewBox="0 0 15 9.3" fill="none"><path d="M1.5 1.5 L7.5 7.800000000000001 L13.5 1.5" stroke="#1f252e" stroke-width="2.6" stroke-linecap="round" stroke-linejoin="round"/></svg>
<div class="b" style="left:547.00px;top:591.50px;width:439.50px;height:757.00px;background:#ffffff;"></div>
<div class="b" style="left:557.00px;top:601.00px;width:421.50px;height:60.00px;border:2.5px solid #d4d9e1;border-radius:9px;background:#ffffff;"></div>
<div class="b" style="left:559.50px;top:603.30px;width:202.20px;height:55.30px;background:#59546f;border-radius:7px 0 0 7px;"></div>
<div class="t" style="top:623.35px;font-size:19.2px;line-height:19.2px;color:#ffffff;-webkit-text-stroke:0.5px #ffffff;transform:scaleX(0.9790);transform-origin:left top;left:595.30px;">POR NÚMERO</div>
<div class="t" style="top:623.35px;font-size:19.2px;line-height:19.2px;color:#1c222b;-webkit-text-stroke:0.55px #1c222b;transform:scaleX(0.9867);transform-origin:left top;left:798.40px;">POR VOLUMEN</div>
<div class="b" style="left:547.00px;top:676.00px;width:439.50px;height:2.50px;background:#e7eaef;"></div>
<div class="b" style="left:547.00px;top:678.50px;width:439.50px;height:69.50px;background:#d4d9e3;"></div>
<div class="t" style="top:703.18px;font-size:24px;line-height:24px;color:#1f252e;transform:scaleX(0.9817);transform-origin:left top;left:564.00px;">Todas las palabras clave</div>
<div class="t" style="top:703.18px;font-size:24px;line-height:24px;color:#7a828f;transform:scaleX(1.0676);transform-origin:right top;right:1589.50px;text-align:right;">40</div>
<svg class="b" style="left:573.00px;top:773.50px;" width="14" height="19" viewBox="0 0 14 19" fill="none"><path d="M2.5 2 L10.5 9.5 L2.5 17" stroke="#1b212a" stroke-width="3.6" stroke-linecap="round" stroke-linejoin="round"/></svg>
<div class="t" style="top:772.34px;font-size:25px;line-height:25px;color:#1f252e;transform:scaleX(0.9984);transform-origin:left top;left:612.80px;">madrid</div>
<div class="t" style="top:773.18px;font-size:24px;line-height:24px;color:#6f7784;right:1589.50px;text-align:right;">3</div>
<svg class="b" style="left:573.00px;top:843.15px;" width="14" height="19" viewBox="0 0 14 19" fill="none"><path d="M2.5 2 L10.5 9.5 L2.5 17" stroke="#1b212a" stroke-width="3.6" stroke-linecap="round" stroke-linejoin="round"/></svg>
<div class="t" style="top:841.99px;font-size:25px;line-height:25px;color:#1f252e;transform:scaleX(0.9777);transform-origin:left top;left:612.80px;">alhambra</div>
<div class="t" style="top:842.83px;font-size:24px;line-height:24px;color:#6f7784;right:1589.50px;text-align:right;">3</div>
<svg class="b" style="left:573.00px;top:912.80px;" width="14" height="19" viewBox="0 0 14 19" fill="none"><path d="M2.5 2 L10.5 9.5 L2.5 17" stroke="#1b212a" stroke-width="3.6" stroke-linecap="round" stroke-linejoin="round"/></svg>
<div class="t" style="top:911.64px;font-size:25px;line-height:25px;color:#1f252e;transform:scaleX(1.0132);transform-origin:left top;left:612.80px;">familia</div>
<div class="t" style="top:912.48px;font-size:24px;line-height:24px;color:#6f7784;right:1589.50px;text-align:right;">2</div>
<svg class="b" style="left:573.00px;top:982.45px;" width="14" height="19" viewBox="0 0 14 19" fill="none"><path d="M2.5 2 L10.5 9.5 L2.5 17" stroke="#1b212a" stroke-width="3.6" stroke-linecap="round" stroke-linejoin="round"/></svg>
<div class="t" style="top:981.29px;font-size:25px;line-height:25px;color:#1f252e;transform:scaleX(0.9723);transform-origin:left top;left:612.80px;">pompeya</div>
<div class="t" style="top:982.13px;font-size:24px;line-height:24px;color:#6f7784;right:1589.50px;text-align:right;">2</div>
<svg class="b" style="left:573.00px;top:1052.10px;" width="14" height="19" viewBox="0 0 14 19" fill="none"><path d="M2.5 2 L10.5 9.5 L2.5 17" stroke="#1b212a" stroke-width="3.6" stroke-linecap="round" stroke-linejoin="round"/></svg>
<div class="t" style="top:1050.94px;font-size:25px;line-height:25px;color:#1f252e;transform:scaleX(0.9284);transform-origin:left top;left:612.80px;">segovia</div>
<div class="t" style="top:1051.78px;font-size:24px;line-height:24px;color:#6f7784;right:1589.50px;text-align:right;">2</div>
<svg class="b" style="left:573.00px;top:1121.75px;" width="14" height="19" viewBox="0 0 14 19" fill="none"><path d="M2.5 2 L10.5 9.5 L2.5 17" stroke="#1b212a" stroke-width="3.6" stroke-linecap="round" stroke-linejoin="round"/></svg>
<div class="t" style="top:1120.59px;font-size:25px;line-height:25px;color:#1f252e;transform:scaleX(0.9408);transform-origin:left top;left:612.80px;">sagrada</div>
<div class="t" style="top:1121.43px;font-size:24px;line-height:24px;color:#6f7784;right:1589.50px;text-align:right;">2</div>
<svg class="b" style="left:573.00px;top:1191.40px;" width="14" height="19" viewBox="0 0 14 19" fill="none"><path d="M2.5 2 L10.5 9.5 L2.5 17" stroke="#1b212a" stroke-width="3.6" stroke-linecap="round" stroke-linejoin="round"/></svg>
<div class="t" style="top:1190.24px;font-size:25px;line-height:25px;color:#1f252e;transform:scaleX(0.9808);transform-origin:left top;left:612.80px;">barcelona</div>
<div class="t" style="top:1191.08px;font-size:24px;line-height:24px;color:#6f7784;right:1589.50px;text-align:right;">2</div>
<svg class="b" style="left:573.00px;top:1261.05px;" width="14" height="19" viewBox="0 0 14 19" fill="none"><path d="M2.5 2 L10.5 9.5 L2.5 17" stroke="#1b212a" stroke-width="3.6" stroke-linecap="round" stroke-linejoin="round"/></svg>
<div class="t" style="top:1259.89px;font-size:25px;line-height:25px;color:#1f252e;transform:scaleX(0.9973);transform-origin:left top;left:612.80px;">cordoba</div>
<div class="t" style="top:1260.73px;font-size:24px;line-height:24px;color:#6f7784;right:1589.50px;text-align:right;">2</div>
<svg class="b" style="left:573.00px;top:1330.70px;" width="14" height="19" viewBox="0 0 14 19" fill="none"><path d="M2.5 2 L10.5 9.5 L2.5 17" stroke="#1b212a" stroke-width="3.6" stroke-linecap="round" stroke-linejoin="round"/></svg>
<div class="t" style="top:1329.54px;font-size:25px;line-height:25px;color:#1f252e;transform:scaleX(0.9866);transform-origin:left top;left:612.80px;">roma</div>
<div class="t" style="top:1330.38px;font-size:24px;line-height:24px;color:#6f7784;right:1589.50px;text-align:right;">2</div>
<div class="b" style="left:994.00px;top:585.00px;width:1558.00px;height:4.50px;background:#eef0f3;"></div>
<div class="b" style="left:994.00px;top:589.50px;width:1558.00px;height:90.50px;background:#f8f9fb;"></div>
<div class="b" style="left:994.00px;top:680.00px;width:1558.00px;height:3.30px;background:#abc9ee;"></div>
<div class="b" style="left:1031.00px;top:621.30px;width:26.00px;height:26.00px;border:3px solid #1b202a;border-radius:4px;"></div>
<div class="t" style="top:625.99px;font-size:18.8px;line-height:18.8px;color:#596470;-webkit-text-stroke:0.7px #596470;letter-spacing:0.768px;left:1079.80px;">PALABRA CLAVE</div>
<div class="t" style="top:625.99px;font-size:18.8px;line-height:18.8px;color:#596470;-webkit-text-stroke:0.7px #596470;letter-spacing:0.830px;left:1837.40px;">DIFICULTAD</div>
<div class="t" style="top:625.99px;font-size:18.8px;line-height:18.8px;color:#596470;-webkit-text-stroke:0.7px #596470;letter-spacing:0.245px;left:2035.10px;">VOL. DE BÚSQU...</div>
<svg class="b" style="left:2225.50px;top:630.50px;" width="15" height="9.3" viewBox="0 0 15 9.3" fill="none"><path d="M1.5 1.5 L7.5 7.800000000000001 L13.5 1.5" stroke="#596470" stroke-width="2.2" stroke-linecap="round" stroke-linejoin="round"/></svg>
<div class="t" style="top:625.99px;font-size:18.8px;line-height:18.8px;color:#596470;-webkit-text-stroke:0.7px #596470;letter-spacing:0.229px;left:2270.90px;">TENDENC...</div>
<div class="b" style="left:2444.9px;top:0;width:107px;height:1359px;overflow:hidden;">
<div class="t" style="top:625.99px;font-size:18.8px;line-height:18.8px;color:#596470;-webkit-text-stroke:0.7px #596470;left:0.00px;letter-spacing:0.9px;">INTENCIÓN</div>
</div>
<div class="b" style="left:1779.00px;top:589.50px;width:2.50px;height:90.50px;background:#eef0f3;"></div>
<div class="b" style="left:2014.50px;top:589.50px;width:2.50px;height:90.50px;background:#eef0f3;"></div>
<div class="b" style="left:2249.50px;top:589.50px;width:2.50px;height:90.50px;background:#eef0f3;"></div>
<div class="b" style="left:2425.00px;top:589.50px;width:2.50px;height:90.50px;background:#eef0f3;"></div>
<div class="b" style="left:994.00px;top:683.30px;width:1558.00px;height:73.25px;background:#f4f8fd;"></div>
<div class="b" style="left:1779.00px;top:683.30px;width:2.50px;height:73.25px;background:#eef0f3;opacity:0.8;"></div>
<div class="b" style="left:2014.50px;top:683.30px;width:2.50px;height:73.25px;background:#eef0f3;opacity:0.8;"></div>
<div class="b" style="left:2249.50px;top:683.30px;width:2.50px;height:73.25px;background:#eef0f3;opacity:0.8;"></div>
<div class="b" style="left:2425.00px;top:683.30px;width:2.50px;height:73.25px;background:#eef0f3;opacity:0.8;"></div>
<div class="b" style="left:994.00px;top:754.00px;width:1558.00px;height:3.00px;background:#abc9ee;"></div>
<div class="b" style="left:1031.00px;top:704.70px;width:26.00px;height:26.00px;border:3px solid #1b202a;border-radius:4px;"></div>
<svg class="b" style="left:1074.50px;top:703.00px;" width="29" height="29" viewBox="0 0 29 29" fill="none"><circle cx="14.5" cy="14.5" r="13" stroke="#6c727a" stroke-width="2.6"/><path d="M14.5 7.5 V21.5 M7.5 14.5 H21.5" stroke="#6c727a" stroke-width="2.6"/></svg>
<div class="t" style="top:706.04px;font-size:25px;line-height:25px;color:#1e6fcb;transform:scaleX(0.9787);transform-origin:left top;left:1118.00px;">tours guiados</div>
<div class="b" style="left:1857.50px;top:697.00px;width:83.00px;height:41.00px;border:2px solid #c2e15a;border-radius:8px;"></div>
<div class="b" style="left:1873.20px;top:713.20px;width:10.60px;height:10.60px;background:#bfdf3e;border-radius:50%;"></div>
<div class="t" style="top:708.61px;font-size:23.5px;line-height:23.5px;color:#1b212a;transform:scaleX(1.0597);transform-origin:center top;left:1889.30px;width:40px;text-align:center;">20</div>
<div class="t" style="top:708.61px;font-size:23.5px;line-height:23.5px;color:#1b212a;transform:scaleX(0.9296);transform-origin:right top;right:341.00px;text-align:right;">10</div>
<svg class="b" style="left:2270.00px;top:695.50px;" width="136" height="44" viewBox="0 0 136 44" fill="none"><path d="M2.0 4.0 L14.0 4.0 L26.0 4.0 L38.0 34.0 L50.0 4.0 L62.0 34.0 L74.0 4.0 L86.0 4.0 L98.0 4.0 L110.0 4.0 L122.0 4.0 L134.0 4.0 L134 41.3 L2 41.3 Z" fill="#e8eff8"/><path d="M2.0 4.0 L14.0 4.0 L26.0 4.0 L38.0 34.0 L50.0 4.0 L62.0 34.0 L74.0 4.0 L86.0 4.0 L98.0 4.0 L110.0 4.0 L122.0 4.0 L134.0 4.0" stroke="#1b72d2" stroke-width="2.4" stroke-linejoin="miter"/></svg>
<div class="b" style="left:2445.00px;top:700.30px;width:34.50px;height:34.40px;background:#e3e0e9;border-radius:8px;"></div>
<div class="t" style="top:708.92px;font-size:19px;line-height:19px;color:#2e2836;-webkit-text-stroke:0.6px #2e2836;left:2445.25px;width:34px;text-align:center;">L</div>
<div class="b" style="left:2486.40px;top:700.30px;width:34.50px;height:34.40px;background:#ece9e6;border-radius:8px;"></div>
<div class="t" style="top:708.92px;font-size:19px;line-height:19px;color:#7a3b2b;-webkit-text-stroke:0.6px #7a3b2b;left:2486.65px;width:34px;text-align:center;">C</div>
<div class="b" style="left:994.00px;top:756.55px;width:1558.00px;height:73.25px;background:#f8f9fb;"></div>
<div class="b" style="left:1779.00px;top:756.55px;width:2.50px;height:73.25px;background:#eef0f3;opacity:0.8;"></div>
<div class="b" style="left:2014.50px;top:756.55px;width:2.50px;height:73.25px;background:#eef0f3;opacity:0.8;"></div>
<div class="b" style="left:2249.50px;top:756.55px;width:2.50px;height:73.25px;background:#eef0f3;opacity:0.8;"></div>
<div class="b" style="left:2425.00px;top:756.55px;width:2.50px;height:73.25px;background:#eef0f3;opacity:0.8;"></div>
<div class="b" style="left:994.00px;top:827.30px;width:1558.00px;height:2.50px;background:#eef0f3;"></div>
<div class="b" style="left:1031.00px;top:777.95px;width:26.00px;height:26.00px;border:3px solid #1b202a;border-radius:4px;"></div>
<svg class="b" style="left:1074.50px;top:776.25px;" width="29" height="29" viewBox="0 0 29 29" fill="none"><circle cx="14.5" cy="14.5" r="13" stroke="#6c727a" stroke-width="2.6"/><path d="M14.5 7.5 V21.5 M7.5 14.5 H21.5" stroke="#6c727a" stroke-width="2.6"/></svg>
<div class="t" style="top:779.29px;font-size:25px;line-height:25px;color:#1e6fcb;transform:scaleX(0.9993);transform-origin:left top;left:1118.00px;">tour guiado vaticano</div>
<div class="b" style="left:1857.50px;top:770.25px;width:83.00px;height:41.00px;border:2px solid #3fb47c;border-radius:8px;"></div>
<div class="b" style="left:1874.20px;top:786.45px;width:10.60px;height:10.60px;background:#3aad74;border-radius:50%;"></div>
<div class="t" style="top:781.86px;font-size:23.5px;line-height:23.5px;color:#1b212a;transform:scaleX(0.8454);transform-origin:center top;left:1890.70px;width:40px;text-align:center;">12</div>
<div class="t" style="top:781.86px;font-size:23.5px;line-height:23.5px;color:#1b212a;transform:scaleX(0.9296);transform-origin:right top;right:341.00px;text-align:right;">10</div>
<div class="b" style="left:2272.00px;top:787.25px;width:132.00px;height:22.50px;background:#e8eff8;"></div>
<div class="b" style="left:2272.00px;top:786.25px;width:132.00px;height:2.50px;background:#1b72d2;"></div>
<div class="b" style="left:2445.00px;top:773.55px;width:34.50px;height:34.40px;background:#d3e2f3;border-radius:8px;"></div>
<div class="t" style="top:782.17px;font-size:19px;line-height:19px;color:#20262f;-webkit-text-stroke:0.6px #20262f;left:2445.25px;width:34px;text-align:center;">I</div>
<div class="b" style="left:994.00px;top:829.80px;width:1558.00px;height:73.25px;background:#ffffff;"></div>
<div class="b" style="left:1779.00px;top:829.80px;width:2.50px;height:73.25px;background:#eef0f3;opacity:0.8;"></div>
<div class="b" style="left:2014.50px;top:829.80px;width:2.50px;height:73.25px;background:#eef0f3;opacity:0.8;"></div>
<div class="b" style="left:2249.50px;top:829.80px;width:2.50px;height:73.25px;background:#eef0f3;opacity:0.8;"></div>
<div class="b" style="left:2425.00px;top:829.80px;width:2.50px;height:73.25px;background:#eef0f3;opacity:0.8;"></div>
<div class="b" style="left:994.00px;top:900.55px;width:1558.00px;height:2.50px;background:#eef0f3;"></div>
<div class="b" style="left:1031.00px;top:851.20px;width:26.00px;height:26.00px;border:3px solid #1b202a;border-radius:4px;"></div>
<svg class="b" style="left:1074.50px;top:849.50px;" width="29" height="29" viewBox="0 0 29 29" fill="none"><circle cx="14.5" cy="14.5" r="13" stroke="#6c727a" stroke-width="2.6"/><path d="M14.5 7.5 V21.5 M7.5 14.5 H21.5" stroke="#6c727a" stroke-width="2.6"/></svg>
<div class="t" style="top:852.54px;font-size:25px;line-height:25px;color:#1e6fcb;transform:scaleX(0.9900);transform-origin:left top;left:1118.00px;">tour guiado londres</div>
<div class="b" style="left:1857.50px;top:843.50px;width:83.00px;height:41.00px;border:2px solid #3fb47c;border-radius:8px;"></div>
<div class="b" style="left:1874.20px;top:859.70px;width:10.60px;height:10.60px;background:#3aad74;border-radius:50%;"></div>
<div class="t" style="top:855.11px;font-size:23.5px;line-height:23.5px;color:#1b212a;transform:scaleX(0.8454);transform-origin:center top;left:1890.70px;width:40px;text-align:center;">17</div>
<div class="t" style="top:855.11px;font-size:23.5px;line-height:23.5px;color:#1b212a;transform:scaleX(0.9296);transform-origin:right top;right:341.00px;text-align:right;">10</div>
<svg class="b" style="left:2270.00px;top:842.00px;" width="136" height="44" viewBox="0 0 136 44" fill="none"><path d="M2.0 34.0 L14.0 34.0 L26.0 34.0 L38.0 34.0 L50.0 34.0 L62.0 34.0 L74.0 34.0 L86.0 4.0 L98.0 34.0 L110.0 34.0 L122.0 34.0 L134.0 34.0 L134 41.3 L2 41.3 Z" fill="#e8eff8"/><path d="M2.0 34.0 L14.0 34.0 L26.0 34.0 L38.0 34.0 L50.0 34.0 L62.0 34.0 L74.0 34.0 L86.0 4.0 L98.0 34.0 L110.0 34.0 L122.0 34.0 L134.0 34.0" stroke="#1b72d2" stroke-width="2.4" stroke-linejoin="miter"/></svg>
<div class="b" style="left:2445.00px;top:846.80px;width:34.50px;height:34.40px;background:#d3e2f3;border-radius:8px;"></div>
<div class="t" style="top:855.42px;font-size:19px;line-height:19px;color:#20262f;-webkit-text-stroke:0.6px #20262f;left:2445.25px;width:34px;text-align:center;">I</div>
<div class="b" style="left:994.00px;top:903.05px;width:1558.00px;height:73.25px;background:#f8f9fb;"></div>
<div class="b" style="left:1779.00px;top:903.05px;width:2.50px;height:73.25px;background:#eef0f3;opacity:0.8;"></div>
<div class="b" style="left:2014.50px;top:903.05px;width:2.50px;height:73.25px;background:#eef0f3;opacity:0.8;"></div>
<div class="b" style="left:2249.50px;top:903.05px;width:2.50px;height:73.25px;background:#eef0f3;opacity:0.8;"></div>
<div class="b" style="left:2425.00px;top:903.05px;width:2.50px;height:73.25px;background:#eef0f3;opacity:0.8;"></div>
<div class="b" style="left:994.00px;top:973.80px;width:1558.00px;height:2.50px;background:#eef0f3;"></div>
<div class="b" style="left:1031.00px;top:924.45px;width:26.00px;height:26.00px;border:3px solid #1b202a;border-radius:4px;"></div>
<svg class="b" style="left:1074.50px;top:922.75px;" width="29" height="29" viewBox="0 0 29 29" fill="none"><circle cx="14.5" cy="14.5" r="13" stroke="#6c727a" stroke-width="2.6"/><path d="M14.5 7.5 V21.5 M7.5 14.5 H21.5" stroke="#6c727a" stroke-width="2.6"/></svg>
<div class="t" style="top:925.79px;font-size:25px;line-height:25px;color:#1e6fcb;transform:scaleX(0.9882);transform-origin:left top;left:1118.00px;">tour guiado barcelona</div>
<div class="b" style="left:1857.50px;top:916.75px;width:83.00px;height:41.00px;border:2px solid #c2e15a;border-radius:8px;"></div>
<div class="b" style="left:1873.20px;top:932.95px;width:10.60px;height:10.60px;background:#bfdf3e;border-radius:50%;"></div>
<div class="t" style="top:928.36px;font-size:23.5px;line-height:23.5px;color:#1b212a;transform:scaleX(1.0597);transform-origin:center top;left:1889.30px;width:40px;text-align:center;">20</div>
<div class="t" style="top:928.36px;font-size:23.5px;line-height:23.5px;color:#1b212a;transform:scaleX(0.9296);transform-origin:right top;right:341.00px;text-align:right;">10</div>
<svg class="b" style="left:2270.00px;top:915.25px;" width="136" height="44" viewBox="0 0 136 44" fill="none"><path d="M2.0 4.0 L14.0 4.0 L26.0 4.0 L38.0 34.0 L50.0 34.0 L62.0 34.0 L74.0 34.0 L86.0 4.0 L98.0 34.0 L110.0 4.0 L122.0 34.0 L134.0 4.0 L134 41.3 L2 41.3 Z" fill="#e8eff8"/><path d="M2.0 4.0 L14.0 4.0 L26.0 4.0 L38.0 34.0 L50.0 34.0 L62.0 34.0 L74.0 34.0 L86.0 4.0 L98.0 34.0 L110.0 4.0 L122.0 34.0 L134.0 4.0" stroke="#1b72d2" stroke-width="2.4" stroke-linejoin="miter"/></svg>
<div class="b" style="left:2445.00px;top:920.05px;width:34.50px;height:34.40px;background:#e3e0e9;border-radius:8px;"></div>
<div class="t" style="top:928.67px;font-size:19px;line-height:19px;color:#2e2836;-webkit-text-stroke:0.6px #2e2836;left:2445.25px;width:34px;text-align:center;">L</div>
<div class="b" style="left:2486.40px;top:920.05px;width:34.50px;height:34.40px;background:#ece9e6;border-radius:8px;"></div>
<div class="t" style="top:928.67px;font-size:19px;line-height:19px;color:#7a3b2b;-webkit-text-stroke:0.6px #7a3b2b;left:2486.65px;width:34px;text-align:center;">C</div>
<div class="b" style="left:994.00px;top:976.30px;width:1558.00px;height:73.25px;background:#ffffff;"></div>
<div class="b" style="left:1779.00px;top:976.30px;width:2.50px;height:73.25px;background:#eef0f3;opacity:0.8;"></div>
<div class="b" style="left:2014.50px;top:976.30px;width:2.50px;height:73.25px;background:#eef0f3;opacity:0.8;"></div>
<div class="b" style="left:2249.50px;top:976.30px;width:2.50px;height:73.25px;background:#eef0f3;opacity:0.8;"></div>
<div class="b" style="left:2425.00px;top:976.30px;width:2.50px;height:73.25px;background:#eef0f3;opacity:0.8;"></div>
<div class="b" style="left:994.00px;top:1047.05px;width:1558.00px;height:2.50px;background:#eef0f3;"></div>
<div class="b" style="left:1031.00px;top:997.70px;width:26.00px;height:26.00px;border:3px solid #1b202a;border-radius:4px;"></div>
<svg class="b" style="left:1074.50px;top:996.00px;" width="29" height="29" viewBox="0 0 29 29" fill="none"><circle cx="14.5" cy="14.5" r="13" stroke="#6c727a" stroke-width="2.6"/><path d="M14.5 7.5 V21.5 M7.5 14.5 H21.5" stroke="#6c727a" stroke-width="2.6"/></svg>
<div class="t" style="top:999.04px;font-size:25px;line-height:25px;color:#1e6fcb;transform:scaleX(0.9700);transform-origin:left top;left:1118.00px;">tours guiados en roma</div>
<div class="b" style="left:1857.50px;top:990.00px;width:83.00px;height:41.00px;border:2px solid #3fb47c;border-radius:8px;"></div>
<div class="b" style="left:1876.20px;top:1006.20px;width:10.60px;height:10.60px;background:#3aad74;border-radius:50%;"></div>
<div class="t" style="top:1001.61px;font-size:23.5px;line-height:23.5px;color:#1b212a;transform:scaleX(1.0482);transform-origin:center top;left:1893.40px;width:40px;text-align:center;">0</div>
<div class="t" style="top:1001.61px;font-size:23.5px;line-height:23.5px;color:#1b212a;transform:scaleX(0.9296);transform-origin:right top;right:341.00px;text-align:right;">10</div>
<div class="b" style="left:2329.00px;top:1011.20px;width:16.50px;height:2.20px;background:#1f252e;"></div>
<div class="t" style="top:999.46px;font-size:24.5px;line-height:24.5px;color:#1b212a;left:2445.80px;">N/A</div>
<div class="b" style="left:994.00px;top:1049.55px;width:1558.00px;height:73.25px;background:#f8f9fb;"></div>
<div class="b" style="left:1779.00px;top:1049.55px;width:2.50px;height:73.25px;background:#eef0f3;opacity:0.8;"></div>
<div class="b" style="left:2014.50px;top:1049.55px;width:2.50px;height:73.25px;background:#eef0f3;opacity:0.8;"></div>
<div class="b" style="left:2249.50px;top:1049.55px;width:2.50px;height:73.25px;background:#eef0f3;opacity:0.8;"></div>
<div class="b" style="left:2425.00px;top:1049.55px;width:2.50px;height:73.25px;background:#eef0f3;opacity:0.8;"></div>
<div class="b" style="left:994.00px;top:1120.30px;width:1558.00px;height:2.50px;background:#eef0f3;"></div>
<div class="b" style="left:1031.00px;top:1070.95px;width:26.00px;height:26.00px;border:3px solid #1b202a;border-radius:4px;"></div>
<svg class="b" style="left:1074.50px;top:1069.25px;" width="29" height="29" viewBox="0 0 29 29" fill="none"><circle cx="14.5" cy="14.5" r="13" stroke="#6c727a" stroke-width="2.6"/><path d="M14.5 7.5 V21.5 M7.5 14.5 H21.5" stroke="#6c727a" stroke-width="2.6"/></svg>
<div class="t" style="top:1072.29px;font-size:25px;line-height:25px;color:#1e6fcb;transform:scaleX(0.9815);transform-origin:left top;left:1118.00px;">tour guiado sagrada familia</div>
<div class="b" style="left:1857.50px;top:1063.25px;width:83.00px;height:41.00px;border:2px solid #3fb47c;border-radius:8px;"></div>
<div class="b" style="left:1874.20px;top:1079.45px;width:10.60px;height:10.60px;background:#3aad74;border-radius:50%;"></div>
<div class="t" style="top:1074.86px;font-size:23.5px;line-height:23.5px;color:#1b212a;transform:scaleX(0.8454);transform-origin:center top;left:1890.70px;width:40px;text-align:center;">12</div>
<div class="t" style="top:1074.86px;font-size:23.5px;line-height:23.5px;color:#1b212a;transform:scaleX(0.9296);transform-origin:right top;right:341.00px;text-align:right;">10</div>
<svg class="b" style="left:2270.00px;top:1061.75px;" width="136" height="44" viewBox="0 0 136 44" fill="none"><path d="M2.0 34.0 L14.0 4.0 L26.0 34.0 L38.0 4.0 L50.0 34.0 L62.0 34.0 L74.0 34.0 L86.0 4.0 L98.0 4.0 L110.0 34.0 L122.0 34.0 L134.0 4.0 L134 41.3 L2 41.3 Z" fill="#e8eff8"/><path d="M2.0 34.0 L14.0 4.0 L26.0 34.0 L38.0 4.0 L50.0 34.0 L62.0 34.0 L74.0 34.0 L86.0 4.0 L98.0 4.0 L110.0 34.0 L122.0 34.0 L134.0 4.0" stroke="#1b72d2" stroke-width="2.4" stroke-linejoin="miter"/></svg>
<div class="b" style="left:2445.00px;top:1066.55px;width:34.50px;height:34.40px;background:#d3e2f3;border-radius:8px;"></div>
<div class="t" style="top:1075.17px;font-size:19px;line-height:19px;color:#20262f;-webkit-text-stroke:0.6px #20262f;left:2445.25px;width:34px;text-align:center;">I</div>
<div class="b" style="left:994.00px;top:1122.80px;width:1558.00px;height:73.25px;background:#ffffff;"></div>
<div class="b" style="left:1779.00px;top:1122.80px;width:2.50px;height:73.25px;background:#eef0f3;opacity:0.8;"></div>
<div class="b" style="left:2014.50px;top:1122.80px;width:2.50px;height:73.25px;background:#eef0f3;opacity:0.8;"></div>
<div class="b" style="left:2249.50px;top:1122.80px;width:2.50px;height:73.25px;background:#eef0f3;opacity:0.8;"></div>
<div class="b" style="left:2425.00px;top:1122.80px;width:2.50px;height:73.25px;background:#eef0f3;opacity:0.8;"></div>
<div class="b" style="left:994.00px;top:1193.55px;width:1558.00px;height:2.50px;background:#eef0f3;"></div>
<div class="b" style="left:1031.00px;top:1144.20px;width:26.00px;height:26.00px;border:3px solid #1b202a;border-radius:4px;"></div>
<svg class="b" style="left:1074.50px;top:1142.50px;" width="29" height="29" viewBox="0 0 29 29" fill="none"><circle cx="14.5" cy="14.5" r="13" stroke="#6c727a" stroke-width="2.6"/><path d="M14.5 7.5 V21.5 M7.5 14.5 H21.5" stroke="#6c727a" stroke-width="2.6"/></svg>
<div class="t" style="top:1145.54px;font-size:25px;line-height:25px;color:#1e6fcb;transform:scaleX(0.9878);transform-origin:left top;left:1118.00px;">tour guiado alhambra</div>
<div class="b" style="left:1857.50px;top:1136.50px;width:83.00px;height:41.00px;border:2px solid #3fb47c;border-radius:8px;"></div>
<div class="b" style="left:1876.20px;top:1152.70px;width:10.60px;height:10.60px;background:#3aad74;border-radius:50%;"></div>
<div class="t" style="top:1148.11px;font-size:23.5px;line-height:23.5px;color:#1b212a;transform:scaleX(1.0176);transform-origin:center top;left:1893.60px;width:40px;text-align:center;">6</div>
<div class="t" style="top:1148.11px;font-size:23.5px;line-height:23.5px;color:#1b212a;transform:scaleX(0.9296);transform-origin:right top;right:341.00px;text-align:right;">10</div>
<svg class="b" style="left:2270.00px;top:1135.00px;" width="136" height="44" viewBox="0 0 136 44" fill="none"><path d="M2.0 4.0 L14.0 4.0 L26.0 4.0 L38.0 4.0 L50.0 34.0 L62.0 4.0 L74.0 34.0 L86.0 4.0 L98.0 4.0 L110.0 34.0 L122.0 34.0 L134.0 4.0 L134 41.3 L2 41.3 Z" fill="#e8eff8"/><path d="M2.0 4.0 L14.0 4.0 L26.0 4.0 L38.0 4.0 L50.0 34.0 L62.0 4.0 L74.0 34.0 L86.0 4.0 L98.0 4.0 L110.0 34.0 L122.0 34.0 L134.0 4.0" stroke="#1b72d2" stroke-width="2.4" stroke-linejoin="miter"/></svg>
<div class="b" style="left:2445.00px;top:1139.80px;width:34.50px;height:34.40px;background:#d3e2f3;border-radius:8px;"></div>
<div class="t" style="top:1148.42px;font-size:19px;line-height:19px;color:#20262f;-webkit-text-stroke:0.6px #20262f;left:2445.25px;width:34px;text-align:center;">I</div>
<div class="b" style="left:994.00px;top:1196.05px;width:1558.00px;height:73.25px;background:#f8f9fb;"></div>
<div class="b" style="left:1779.00px;top:1196.05px;width:2.50px;height:73.25px;background:#eef0f3;opacity:0.8;"></div>
<div class="b" style="left:2014.50px;top:1196.05px;width:2.50px;height:73.25px;background:#eef0f3;opacity:0.8;"></div>
<div class="b" style="left:2249.50px;top:1196.05px;width:2.50px;height:73.25px;background:#eef0f3;opacity:0.8;"></div>
<div class="b" style="left:2425.00px;top:1196.05px;width:2.50px;height:73.25px;background:#eef0f3;opacity:0.8;"></div>
<div class="b" style="left:994.00px;top:1266.80px;width:1558.00px;height:2.50px;background:#eef0f3;"></div>
<div class="b" style="left:1031.00px;top:1217.45px;width:26.00px;height:26.00px;border:3px solid #1b202a;border-radius:4px;"></div>
<svg class="b" style="left:1074.50px;top:1215.75px;" width="29" height="29" viewBox="0 0 29 29" fill="none"><circle cx="14.5" cy="14.5" r="13" stroke="#6c727a" stroke-width="2.6"/><path d="M14.5 7.5 V21.5 M7.5 14.5 H21.5" stroke="#6c727a" stroke-width="2.6"/></svg>
<div class="t" style="top:1218.79px;font-size:25px;line-height:25px;color:#1e6fcb;transform:scaleX(0.9864);transform-origin:left top;left:1118.00px;">tours guiados madrid</div>
<div class="b" style="left:1857.50px;top:1209.75px;width:83.00px;height:41.00px;border:2px solid #3fb47c;border-radius:8px;"></div>
<div class="b" style="left:1876.20px;top:1225.95px;width:10.60px;height:10.60px;background:#3aad74;border-radius:50%;"></div>
<div class="t" style="top:1221.36px;font-size:23.5px;line-height:23.5px;color:#1b212a;transform:scaleX(1.0482);transform-origin:center top;left:1893.40px;width:40px;text-align:center;">0</div>
<div class="t" style="top:1221.36px;font-size:23.5px;line-height:23.5px;color:#1b212a;transform:scaleX(0.9296);transform-origin:right top;right:341.00px;text-align:right;">10</div>
<div class="b" style="left:2329.00px;top:1230.95px;width:16.50px;height:2.20px;background:#1f252e;"></div>
<div class="b" style="left:2445.00px;top:1213.05px;width:34.50px;height:34.40px;background:#d3e2f3;border-radius:8px;"></div>
<div class="t" style="top:1221.67px;font-size:19px;line-height:19px;color:#20262f;-webkit-text-stroke:0.6px #20262f;left:2445.25px;width:34px;text-align:center;">I</div>
<div class="b" style="left:994.00px;top:1269.30px;width:1558.00px;height:73.25px;background:#ffffff;"></div>
<div class="b" style="left:1779.00px;top:1269.30px;width:2.50px;height:73.25px;background:#eef0f3;opacity:0.8;"></div>
<div class="b" style="left:2014.50px;top:1269.30px;width:2.50px;height:73.25px;background:#eef0f3;opacity:0.8;"></div>
<div class="b" style="left:2249.50px;top:1269.30px;width:2.50px;height:73.25px;background:#eef0f3;opacity:0.8;"></div>
<div class="b" style="left:2425.00px;top:1269.30px;width:2.50px;height:73.25px;background:#eef0f3;opacity:0.8;"></div>
<div class="b" style="left:994.00px;top:1340.05px;width:1558.00px;height:2.50px;background:#eef0f3;"></div>
<div class="b" style="left:1031.00px;top:1290.70px;width:26.00px;height:26.00px;border:3px solid #1b202a;border-radius:4px;"></div>
<svg class="b" style="left:1074.50px;top:1289.00px;" width="29" height="29" viewBox="0 0 29 29" fill="none"><circle cx="14.5" cy="14.5" r="13" stroke="#6c727a" stroke-width="2.6"/><path d="M14.5 7.5 V21.5 M7.5 14.5 H21.5" stroke="#6c727a" stroke-width="2.6"/></svg>
<div class="t" style="top:1292.04px;font-size:25px;line-height:25px;color:#1e6fcb;transform:scaleX(0.9947);transform-origin:left top;left:1118.00px;">tour guiado roma</div>
<div class="b" style="left:1857.50px;top:1283.00px;width:83.00px;height:41.00px;border:2px solid #3fb47c;border-radius:8px;"></div>
<div class="b" style="left:1874.20px;top:1299.20px;width:10.60px;height:10.60px;background:#3aad74;border-radius:50%;"></div>
<div class="t" style="top:1294.61px;font-size:23.5px;line-height:23.5px;color:#1b212a;transform:scaleX(0.8454);transform-origin:center top;left:1890.70px;width:40px;text-align:center;">17</div>
<div class="t" style="top:1294.61px;font-size:23.5px;line-height:23.5px;color:#1b212a;transform:scaleX(0.9296);transform-origin:right top;right:341.00px;text-align:right;">10</div>
<svg class="b" style="left:2270.00px;top:1281.50px;" width="136" height="44" viewBox="0 0 136 44" fill="none"><path d="M2.0 4.0 L14.0 34.0 L26.0 34.0 L38.0 4.0 L50.0 34.0 L62.0 4.0 L74.0 4.0 L86.0 4.0 L98.0 4.0 L110.0 34.0 L122.0 4.0 L134.0 4.0 L134 41.3 L2 41.3 Z" fill="#e8eff8"/><path d="M2.0 4.0 L14.0 34.0 L26.0 34.0 L38.0 4.0 L50.0 34.0 L62.0 4.0 L74.0 4.0 L86.0 4.0 L98.0 4.0 L110.0 34.0 L122.0 4.0 L134.0 4.0" stroke="#1b72d2" stroke-width="2.4" stroke-linejoin="miter"/></svg>
<div class="b" style="left:2445.00px;top:1286.30px;width:34.50px;height:34.40px;background:#d3e2f3;border-radius:8px;"></div>
<div class="t" style="top:1294.92px;font-size:19px;line-height:19px;color:#20262f;-webkit-text-stroke:0.6px #20262f;left:2445.25px;width:34px;text-align:center;">I</div>
<div class="b" style="left:2552.00px;top:226.00px;width:8.00px;height:1133.00px;background:#eff1f4;"></div>
<div class="b" style="left:507.00px;top:1280.00px;width:2045.00px;height:79.00px;background:linear-gradient(rgba(230,232,236,0),rgba(225,228,233,0.35));"></div>
<div class="b" style="left:539.00px;top:583.50px;width:455.00px;height:773.00px;border:8px solid #ff0000;border-radius:4px;"></div>
<div class="b" style="left:995.00px;top:1352.00px;width:953.00px;height:10.00px;background:#a8adb5;border-radius:5px;"></div>
<div class="b" style="left:2431.50px;top:1164.50px;width:112.00px;height:112.00px;background:#0a6cf6;border-radius:50%;box-shadow:0 4px 24px rgba(20,40,80,0.12);"></div>
<div class="b" style="left:2461.00px;top:1204.50px;width:53.50px;height:27.00px;background:#ffffff;border-radius:14px;"></div>
<svg class="b" style="left:2492.00px;top:1235.00px;" width="14" height="12" viewBox="0 0 14 12" fill="none"><path d="M0.5 0.5 H12.5 V11.5 Z" fill="#ffffff"/></svg>
</div></body></html>
